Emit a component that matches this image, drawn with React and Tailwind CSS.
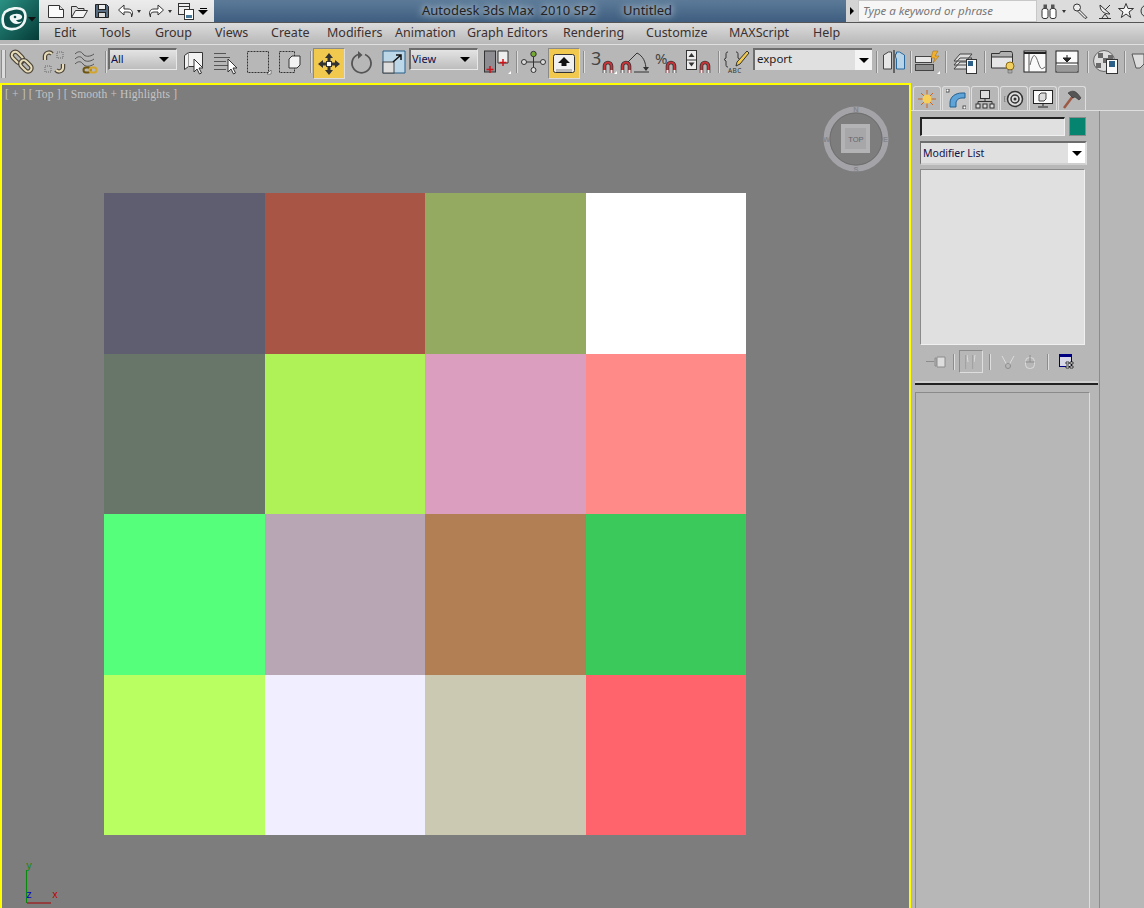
import React from "react";

const swatches = [
  "bg-[#5f5d70]", "bg-[#a95546]", "bg-[#94aa60]", "bg-[#ffffff]",
  "bg-[#68766a]", "bg-[#aef257]", "bg-[#db9ebf]", "bg-[#ff8a87]",
  "bg-[#55ff7c]", "bg-[#b8a6b5]", "bg-[#b27e54]", "bg-[#3bc95c]",
  "bg-[#b9ff62]", "bg-[#f0eeff]", "bg-[#cbc9b1]", "bg-[#ff636b]",
];

const menus = [
  ["Edit", "w-[46px]"], ["Tools", "w-[55px]"], ["Group", "w-[60px]"], ["Views", "w-[56px]"],
  ["Create", "w-[56px]"], ["Modifiers", "w-[68px]"], ["Animation", "w-[72px]"], ["Graph Editors", "w-[96px]"],
  ["Rendering", "w-[83px]"], ["Customize", "w-[83px]"], ["MAXScript", "w-[84px]"], ["Help", "w-[40px]"],
];

function Ico({ w, h = 24, ml, children }) {
  return (
    <svg width={w} height={h} viewBox={`0 0 ${w} ${h}`} className={`shrink-0 overflow-visible ${ml || ""}`}>
      {children}
    </svg>
  );
}

function Sep({ ml }) {
  return <div className={`w-[2px] h-[22px] mt-[1px] shrink-0 bg-[#8c8c8c] border-r border-[#dedede] ${ml}`}></div>;
}

function Chain() {
  return (
    <g transform="rotate(45 12 12)">
      <rect x="-1" y="8.500" width="13" height="7" rx="3.500" fill="none" stroke="#4a4438" strokeWidth="4.400" />
      <rect x="-1" y="8.500" width="13" height="7" rx="3.500" fill="none" stroke="#e9dcb8" strokeWidth="2" />
      <rect x="11" y="8.500" width="13" height="7" rx="3.500" fill="none" stroke="#4a4438" strokeWidth="4.400" />
      <rect x="11" y="8.500" width="13" height="7" rx="3.500" fill="none" stroke="#e9dcb8" strokeWidth="2" />
    </g>
  );
}

function Magnet({ x, y }) {
  return (
    <g transform={`translate(${x} ${y})`}>
      <path d="M1.500 12V5a3.500 3.500 0 0 1 7 0v7" fill="none" stroke="#333" strokeWidth="3.600" />
      <path d="M1.500 12V5a3.500 3.500 0 0 1 7 0v7" fill="none" stroke="#c8343a" strokeWidth="2" />
      <path d="M0.500 9h2v3h-2zM7.500 9h2v3h-2z" fill="#eee" />
    </g>
  );
}

function Arrow({ x, y }) {
  return (
    <path transform={`translate(${x} ${y})`} d="M0 0v13l3-3 2.500 5 2-1-2.500-5h4z" fill="#fff" stroke="#333" strokeWidth="1" />
  );
}

function Tri() {
  return <div className="w-0 h-0 border-x-[5px] border-x-transparent border-t-[5px] border-t-black"></div>;
}

function SmallTri({ ml }) {
  return <div className={`${ml} w-0 h-0 border-x-[2.5px] border-x-transparent border-t-[3px] border-t-[#333]`}></div>;
}

function Drop({ label, ml }) {
  return (
    <div className={`w-[69px] ${ml} h-[22px] -mt-[2px] shrink-0 flex items-center justify-between pl-[1px] pr-[7px] text-[11px] text-[#10104a] bg-gradient-to-b from-[#e4e4e4] to-[#bdbdbd] border-t-2 border-l-2 border-[#6d6d6d] border-b border-r border-b-[#e8e8e8] border-r-[#e8e8e8]`}>
      <span>{label}</span>
      <Tri />
    </div>
  );
}

export default function App() {
  return (
    <div className="w-[1144px] h-[908px] overflow-hidden flex flex-col bg-[#b7b7b7] font-['Noto_Sans','Open_Sans',sans-serif] text-[#333]">
      {/* top: logo + title + menus */}
      <div className="flex h-[44px] shrink-0">
        <div className="w-[39px] h-[40px] shrink-0 flex items-center bg-gradient-to-br from-[#2a9184] to-[#063c38]">
          <svg width="39" height="40" viewBox="0 0 39 40">
            <path d="M5 12c5-4 14-5 18-2 4 4 3 13-3 17-5 3-13 3-16-1-2-4-2-10 1-14z" fill="#0d4f4a" stroke="#eef7f5" strokeWidth="2.600" />
            <path d="M10 16c4-3 10-3 12 0 1 3-3 4-6 4 1 2 4 3 6 1-1 3-6 4-9 2-3-2-4-5-3-7z" fill="#eef7f5" />
            <circle cx="15" cy="17" r="1.300" fill="#0d4f4a" />
            <path d="M28 17h8l-4 4.500z" fill="#111" />
          </svg>
        </div>
        <div className="flex-1 flex flex-col min-w-0">
          <div className="h-[22px] flex shrink-0">
            <div className="w-[175px] shrink-0 flex items-center pl-[8px] bg-gradient-to-b from-[#ececec] to-[#dcdcdc]">
              <Ico w={18} h={18}><path d="M1.500 3.500h11l4 4v8h-15z" fill="#fbfbfb" stroke="#333" /><path d="M12.500 3.500v4h4" fill="#ddd" stroke="#333" /></Ico>
              <Ico w={18} h={18} ml="ml-[5px]"><path d="M1.500 15.500v-11h5l1.500 2h6v2" fill="#ddd" stroke="#333" /><path d="M1.500 15.500l4-7h12l-4 7z" fill="#f4f4f4" stroke="#333" /></Ico>
              <Ico w={16} h={18} ml="ml-[6px]"><path d="M1.500 2.500h11l2 2v11h-13z" fill="#566b80" stroke="#222" /><rect x="4.500" y="2.500" width="7" height="5" fill="#eee" stroke="#222" /><rect x="4.500" y="10.500" width="7" height="5" fill="#ddd" stroke="#222" /></Ico>
              <Ico w={17} h={18} ml="ml-[7px]"><path d="M7 3L1.500 8 7 13v-3h4c3 0 4 2 3.500 5 2-4 1-8-3.500-8H7z" fill="#fff" stroke="#333" /></Ico>
              <SmallTri ml="ml-[3px]" />
              <Ico w={17} h={18} ml="ml-[7px]"><path d="M10 3l5.500 5L10 13v-3H6c-3 0-4 2-3.500 5-2-4-1-8 3.500-8h4z" fill="#fff" stroke="#333" /></Ico>
              <SmallTri ml="ml-[3px]" />
              <Ico w={17} h={20} ml="ml-[6px]"><rect x="0.500" y="2.500" width="11" height="11" fill="#eee" stroke="#333" /><path d="M0.500 5.500h11" stroke="#333" /><rect x="6.500" y="8.500" width="9" height="10" fill="#fff" stroke="#333" /><rect x="8" y="14" width="6" height="3" fill="#4a7a9a" /></Ico>
              <div className="ml-[3px] flex flex-col items-center gap-[1px]"><div className="w-[7px] h-[1px] bg-black"></div><Tri /></div>
            </div>
            <div className="w-[632px] shrink-0 flex items-center bg-gradient-to-b from-[#5c7a98] to-[#3f5e80]">
              <span className="ml-[208px] text-[13px] text-[#222] whitespace-pre [text-shadow:0_0_6px_#ccd6df,0_0_10px_#ccd6df]">Autodesk 3ds Max  2010 SP2</span>
              <span className="ml-[27px] text-[13px] text-[#222] [text-shadow:0_0_6px_#ccd6df,0_0_10px_#ccd6df]">Untitled</span>
            </div>
            <div className="w-[12px] shrink-0 flex items-center justify-center bg-[#d4d4d4]">
              <div className="w-0 h-0 border-y-[4px] border-y-transparent border-l-[4px] border-l-black"></div>
            </div>
            <div className="w-[179px] shrink-0 flex items-center pl-[4px] text-[11.5px] italic text-[#777] bg-[#f6f6f6] border border-[#c8c8c8]">
              Type a keyword or phrase
            </div>
            <div className="flex-1 flex items-center pl-[4px] bg-[#dcdcdc]">
              <Ico w={16} h={18}><rect x="1" y="6.500" width="6" height="10" rx="2" fill="#fff" stroke="#333" /><rect x="9" y="6.500" width="6" height="10" rx="2" fill="#fff" stroke="#333" /><rect x="2.500" y="2.500" width="3.500" height="4" fill="#555" /><rect x="10" y="2.500" width="3.500" height="4" fill="#555" /></Ico>
              <SmallTri ml="ml-[5px]" />
              <Ico w={17} h={18} ml="ml-[6px]"><circle cx="5" cy="5.500" r="3.500" fill="#eee" stroke="#333" /><path d="M7.500 8l7.500 7.500-2 1L6 9.500z" fill="#eee" stroke="#333" /></Ico>
              <Ico w={16} h={18} ml="ml-[8px]"><path d="M3 3c0 6 4 9 10 9z" fill="#eee" stroke="#333" /><path d="M8 8l5-5M2 16.500h12M8 12l-3 4M8 12l3 4" stroke="#333" fill="none" /></Ico>
              <Ico w={16} h={18} ml="ml-[5px]"><path d="M8 1.500l2 5h5.500l-4.500 3.500 1.700 5.500L8 12l-4.700 3.500L5 10 .5 6.500H6z" fill="#f6f6f6" stroke="#333" /></Ico>
              <Ico w={10} h={18} ml="ml-[5px]"><circle cx="8" cy="9" r="6" fill="none" stroke="#333" /></Ico>
            </div>
          </div>
          <div className="h-[1px] bg-[#555] shrink-0"></div>
          <div className="flex-1 flex items-center pl-[15px] text-[12.5px] text-[#3b3030] bg-gradient-to-b from-[#dcdcdc] to-[#b8b8b8]">
            {menus.map(([label, width]) => (
              <span key={label} className={`${width} shrink-0`}>{label}</span>
            ))}
          </div>
        </div>
      </div>

      {/* main toolbar */}
      <div className="h-[39px] shrink-0 flex items-start pt-[5px] border-t border-[#e0e0e0]">
        <div className="w-[5px] h-[28px] shrink-0 ml-[1px] border-x border-[#8c8c8c] bg-[#dcdcdc]"></div>
        <Ico w={24} ml="ml-[4px]"><Chain /></Ico>
        <Ico w={24} ml="ml-[8px]">
          <path d="M3 10V6a4 4 0 0 1 7-2M21 14v4a4 4 0 0 1-7 2" fill="none" stroke="#4a4438" strokeWidth="4.400" />
          <path d="M3 10V6a4 4 0 0 1 7-2M21 14v4a4 4 0 0 1-7 2" fill="none" stroke="#e9dcb8" strokeWidth="2" />
          <path d="M15 2h6v6h-6zM3 16h6v6H3z" fill="none" stroke="#666" strokeDasharray="1 1" />
        </Ico>
        <Ico w={25} ml="ml-[8px]">
          <path d="M1 4c3-3 6-3 8 0s7 3 11 0M1 9c3-3 6-3 8 0s7 3 11 0M1 14c3-3 6-3 8 0s7 3 11 0" fill="none" stroke="#555" strokeWidth="1" />
          <rect x="9.500" y="17.500" width="7" height="5" rx="2.500" fill="none" stroke="#6d5510" strokeWidth="2" />
          <rect x="15.500" y="17.500" width="7" height="5" rx="2.500" fill="none" stroke="#d4a52c" strokeWidth="2" />
        </Ico>
        <Sep ml="ml-[6px]" />
        <Drop label="All" ml="ml-[1px]" />
        <Ico w={22} ml="ml-[6px]">
          <path d="M1.500 5.500l4-3h14v14h-14l-4 3z" fill="#f2f2f2" stroke="#333" />
          <path d="M5.500 2.500v14" stroke="#999" />
          <Arrow x={11} y={9} />
        </Ico>
        <Ico w={26} ml="ml-[8px]">
          <path d="M1 3.500h12M1 7.500h16M1 11.500h12M1 15.500h16M1 19.500h12" stroke="#555" />
          <Arrow x={15} y={9} />
        </Ico>
        <Ico w={25} ml="ml-[7px]">
          <rect x="1.500" y="1.500" width="21" height="21" fill="none" stroke="#333" strokeDasharray="2 1" />
          <path d="M21 24h4v-4z" fill="#fff" stroke="#333" strokeWidth=".5" />
        </Ico>
        <Ico w={24} ml="ml-[7px]">
          <rect x="1.500" y="1.500" width="15" height="21" fill="none" stroke="#333" strokeDasharray="2 1" />
          <path d="M11 9l3-3h8v9l-3 3h-8z" fill="#f2f2f2" stroke="#333" />
        </Ico>
        <Sep ml="ml-[8px]" />
        <div className="ml-[1px] -mt-[2px] w-[32px] h-[31px] shrink-0 flex items-center justify-center bg-[#f2c94f] border border-[#8a8a8a] border-b-[#dedede] border-r-[#dedede]">
          <svg width="24" height="24" viewBox="0 0 24 24">
            <path d="M12 1l4 5h-2.500v3h-3V6H8zM12 23l4-5h-2.500v-3h-3v3H8zM1 12l5-4v2.500h3v3H6V16zM23 12l-5-4v2.500h-3v3h3V16z" fill="#333" />
            <rect x="9.500" y="9.500" width="5" height="5" fill="#fff" stroke="#333" />
          </svg>
        </div>
        <Ico w={23} ml="ml-[5px]">
          <path d="M8 4.500a9.500 9.500 0 1 0 7 0" fill="none" stroke="#555" strokeWidth="1.800" />
          <path d="M8 1v8l4.500-4z" fill="#555" />
        </Ico>
        <Ico w={24} ml="ml-[9px]">
          <path d="M1 1h22v22H1z" fill="#bcd7e8" stroke="#2b5f88" />
          <rect x="1" y="12" width="11" height="11" fill="#ddd" stroke="#444" />
          <path d="M11 12l8-7m-5 0h5v5" fill="none" stroke="#111" strokeWidth="1.500" />
        </Ico>
        <Drop label="View" ml="ml-[3px]" />
        <Ico w={28} ml="ml-[5px]">
          <rect x="1.500" y="1" width="11" height="21" fill="#8d8d92" stroke="#333" />
          <path d="M15 1h10v12H15z" fill="#eee" stroke="#333" />
          <path d="M7 16v7M3.500 19.500h7M20 9v7M16.500 12.500h7" stroke="#d0121a" strokeWidth="1.500" />
          <path d="M25 24h3v-3z" fill="#fff" />
        </Ico>
        <Sep ml="ml-[5px]" />
        <Ico w={25} ml="ml-[3px]">
          <path d="M12.500 5v14M3 12h19" stroke="#333" />
          <circle cx="12.500" cy="4" r="2.700" fill="#77aa33" stroke="#333" />
          <circle cx="3" cy="12" r="2.500" fill="#ddd" stroke="#333" />
          <circle cx="22" cy="12" r="2.500" fill="#ddd" stroke="#333" />
          <circle cx="12.500" cy="20" r="2.500" fill="#ddd" stroke="#333" />
        </Ico>
        <div className="ml-[2px] -mt-[2px] w-[32px] h-[31px] shrink-0 flex items-center justify-center bg-[#f2c94f] border border-[#8a8a8a] border-b-[#dedede] border-r-[#dedede]">
          <svg width="24" height="22" viewBox="0 0 24 22">
            <rect x="1.500" y="1.500" width="21" height="18" rx="2" fill="#f0f0f0" stroke="#333" />
            <path d="M4 16h16v3H4z" fill="#bbb" />
            <path d="M12 4l6 6h-3.500v3h-5v-3H6z" fill="#111" />
          </svg>
        </div>
        <Sep ml="ml-[3px]" />
        <Ico w={26} ml="ml-[6px]">
          <text x="0" y="15" fontSize="18" fill="#444" fontFamily="Noto Sans, sans-serif">3</text>
          <Magnet x={12} y={11} />
          <path d="M23 24h3v-3z" fill="#fff" />
        </Ico>
        <Ico w={29} ml="ml-[4px]">
          <path d="M13 22h15M5 14L16 3c6 3 9 9 9 17" fill="none" stroke="#333" />
          <path d="M22 17l3 4 3-4z" fill="#333" />
          <Magnet x={0} y={11} />
        </Ico>
        <Ico w={24} ml="ml-[5px]">
          <text x="0" y="14" fontSize="15" fill="#444" fontFamily="Noto Sans, sans-serif">%</text>
          <Magnet x={11} y={11} />
        </Ico>
        <Ico w={26} ml="ml-[7px]">
          <rect x="0.500" y="0.500" width="10" height="19" fill="#eee" stroke="#333" />
          <path d="M0.500 10h10" stroke="#333" />
          <path d="M5.500 3l3 4h-6zM5.500 16.500l3-4h-6z" fill="#333" />
          <Magnet x={14} y={11} />
        </Ico>
        <Sep ml="ml-[6px]" />
        <Ico w={26} ml="ml-[3px]">
          <path d="M5 2c-2 0-2 1-2 3v3L1 9.500 3 11v3c0 2 0 3 2 3M13 2c2 0 2 1 2 3v3l2 1.500" fill="none" stroke="#333" />
          <path d="M24 1l2 2-9 11-4 2 1-4z" fill="#f2c94f" stroke="#333" />
          <text x="5" y="23" fontSize="6.500" fill="#333" letterSpacing=".4" fontFamily="Noto Sans, sans-serif">ABC</text>
        </Ico>
        <div className="ml-[4px] -mt-[2px] w-[119px] h-[22px] shrink-0 flex items-center justify-between pl-[2px] pr-[7px] pb-[2px] text-[11.5px] text-[#222] bg-[#e0e0e0] border-t-2 border-l-2 border-[#6d6d6d]">
          <span>export</span>
          <div className="w-[17px] -mr-[7px] -mb-[2px] h-[20px] bg-[#f4f4f4] flex items-center justify-center"><Tri /></div>
        </div>
        <Sep ml="ml-[4px]" />
        <Ico w={24} ml="ml-[4px]">
          <path d="M1.500 5l5-3h3v17h-8z" fill="#e6e6e6" stroke="#444" />
          <path d="M12 0v23" stroke="#111" />
          <path d="M22.500 5l-5-3h-3v2h-1v3l1 2v10h8z" fill="#b8d4e8" stroke="#2b6a9e" />
        </Ico>
        <Sep ml="ml-[4px]" />
        <Ico w={26} ml="ml-[2px]">
          <rect x="1.500" y="6.500" width="16" height="6" fill="#e8e8e8" stroke="#444" />
          <rect x="1.500" y="14.500" width="18" height="6" fill="#909090" stroke="#444" />
          <path d="M19 1l5 0-3 5h4l-6 7 2-5h-4z" fill="#f0b030" stroke="#a06a10" strokeWidth=".5" />
          <path d="M23 24h3v-3z" fill="#fff" />
        </Ico>
        <Sep ml="ml-[5px]" />
        <Ico w={24} ml="ml-[6px]">
          <path d="M1 11l6-7h12l-6 7zM1 15l6-7h12l-6 7zM1 19l6-7h12l-6 7z" fill="#ddd" stroke="#444" />
          <rect x="13.500" y="9.500" width="10" height="14" fill="#fafafa" stroke="#333" />
          <rect x="15" y="11" width="5" height="5" fill="#2b5f88" />
        </Ico>
        <Sep ml="ml-[7px]" />
        <Ico w={26} ml="ml-[4px]">
          <path d="M1.500 3.500h8l1-2h11l1 2v14h-21z" fill="#b0b0b0" stroke="#333" />
          <path d="M1.500 7h21v11h-21z" fill="#e6e6e6" stroke="#333" />
          <circle cx="20" cy="16" r="4" fill="#f2d060" stroke="#8a6a10" />
          <path d="M18 20h4v3h-4z" fill="#aaa" stroke="#555" strokeWidth=".5" />
        </Ico>
        <Ico w={24} ml="ml-[7px]">
          <rect x="1" y="1" width="22" height="21" fill="#fafafa" stroke="#222" />
          <path d="M1 3h22" stroke="#222" strokeWidth="2" />
          <path d="M6 4v18" stroke="#555" />
          <path d="M7 15c3-12 5-12 8-3s4 7 7 5" fill="none" stroke="#666" />
        </Ico>
        <Ico w={24} ml="ml-[8px]">
          <rect x="1" y="1" width="22" height="21" fill="#fafafa" stroke="#222" />
          <path d="M1 13h22" stroke="#222" />
          <rect x="2" y="15" width="20" height="6" fill="#999" />
          <path d="M12 5v4M8 8h8l-4 4z" fill="#222" stroke="#222" />
        </Ico>
        <Sep ml="ml-[8px]" />
        <Ico w={25} ml="ml-[4px]">
          <circle cx="11" cy="11" r="10.500" fill="#dcdcdc" stroke="#666" />
          <path d="M5 3h5v5H5zM15 5h5v5h-5zM10 8h5v5h-5zM3 13h5v5H3zM15 13h5v5h-5z" fill="#6a6a6a" />
          <rect x="13.500" y="9.500" width="11" height="14" fill="#fafafa" stroke="#333" />
          <rect x="16" y="11" width="6" height="6" fill="#2b5f88" />
        </Ico>
        <Sep ml="ml-[6px]" />
        <Ico w={14} ml="ml-[5px]">
          <path d="M1 4h12v10l-4 4H5z" fill="#ddd" stroke="#555" />
        </Ico>
      </div>

      {/* body */}
      <div className="flex-1 flex min-h-0">
        <div className="relative w-[911px] shrink-0 bg-[#7d7d7d] border-2 border-[#ffff00] border-b-0">
          <div className="absolute left-[3px] top-[1px] text-[11.5px] tracking-[.15px] text-[#c4c4c4] font-['Liberation_Serif',serif] whitespace-pre">[ + ] [ Top ] [ Smooth + Highlights ]</div>
          <div className="absolute left-[820px] top-[20px] w-[68px] h-[68px]">
            <svg width="68" height="68" viewBox="0 0 68 68" className="overflow-visible">
              <circle cx="34" cy="34" r="29.500" fill="none" stroke="#a3a3a8" strokeWidth="6" />
              <circle cx="34" cy="34" r="26" fill="none" stroke="#6f6f6f" strokeWidth="1" />
              <rect x="19" y="19" width="29" height="29" fill="#b3b3b5" />
              <rect x="23" y="23" width="21" height="21" fill="#a7a7a9" />
              <text x="34" y="37" fontSize="7.500" textAnchor="middle" fill="#66666a" fontFamily="Liberation Sans, sans-serif">TOP</text>
              <text x="34" y="7" fontSize="7.500" textAnchor="middle" fill="#85858c" fontFamily="Liberation Sans, sans-serif" fontWeight="700">N</text>
              <text x="34" y="67" fontSize="7.500" textAnchor="middle" fill="#85858c" fontFamily="Liberation Sans, sans-serif" fontWeight="700">S</text>
              <text x="1" y="37" fontSize="7.500" fill="#85858c" fontFamily="Liberation Sans, sans-serif" fontWeight="700">W</text>
              <text x="61" y="37" fontSize="7.500" fill="#85858c" fontFamily="Liberation Sans, sans-serif" fontWeight="700">E</text>
            </svg>
          </div>
          <div className="absolute left-[20px] top-[775px]">
            <svg width="45" height="50" viewBox="0 0 45 50" className="overflow-visible">
              <path d="M4.500 10v33" stroke="#0a8a0a" strokeWidth="1" />
              <path d="M5 43h24" stroke="#a80000" strokeWidth="1" />
              <text x="4" y="9" fontSize="10" fill="#0a8a0a" fontFamily="Liberation Mono, monospace">y</text>
              <text x="4" y="38" fontSize="10" fill="#0000c0" fontFamily="Liberation Mono, monospace">z</text>
              <text x="30" y="38" fontSize="10" fill="#c00000" fontFamily="Liberation Mono, monospace">x</text>
            </svg>
          </div>
          <div className="ml-[102px] mt-[108px] w-[642px] h-[642px] grid grid-cols-4 grid-rows-4">
            {swatches.map((cls, i) => (
              <div key={i} className={cls}></div>
            ))}
          </div>
        </div>

        {/* command panel */}
        <div className="flex-1 flex flex-col pt-[3px] min-w-0">
          <div className="h-[25px] shrink-0 flex pl-[2px] gap-[1px] border-b border-[#dedede]">
            {[0, 1, 2, 3, 4, 5].map((t) => (
              <div key={t} className={`w-[28px] flex items-center justify-center border border-b-0 border-[#dedede] rounded-t-[3px] ${t === 1 ? "bg-[#c6c6c6]" : ""}`}>
                <svg width="20" height="20" viewBox="0 0 20 20">
                  {t === 0 && (
                    <>
                      <path d="M10 1v18M1 10h18M4 4l12 12M16 4L4 16" stroke="#c8641e" strokeWidth="1" />
                      <circle cx="10" cy="10" r="4.500" fill="#f6cf5a" />
                    </>
                  )}
                  {t === 1 && (
                    <>
                      <path d="M4 18V14C4 8 9 4 16 4h3v5h-3c-3 0-6 2-6 5v4z" fill="#5fa4d8" stroke="#24608e" />
                      <rect x="0" y="0" width="3" height="3" fill="#fff" stroke="#333" strokeWidth=".8" />
                      <rect x="17" y="17" width="3" height="3" fill="#fff" stroke="#333" strokeWidth=".8" />
                    </>
                  )}
                  {t === 2 && (
                    <>
                      <rect x="5.500" y="1.500" width="9" height="8" fill="#ddd" stroke="#333" />
                      <path d="M10 9.500v3M3 15v-2.500h14V15" fill="none" stroke="#333" />
                      <rect x="1" y="15" width="4" height="4" fill="#ddd" stroke="#333" />
                      <rect x="8" y="15" width="4" height="4" fill="#ddd" stroke="#333" />
                      <rect x="15" y="15" width="4" height="4" fill="#ddd" stroke="#333" />
                    </>
                  )}
                  {t === 3 && (
                    <>
                      <circle cx="11" cy="10" r="7.500" fill="#ddd" stroke="#333" strokeWidth="1.500" />
                      <circle cx="11" cy="10" r="4" fill="none" stroke="#333" strokeWidth="1.500" />
                      <circle cx="11" cy="10" r="1.500" fill="#333" />
                      <path d="M1 7c-1 2-1 4 0 6" fill="none" stroke="#777" />
                    </>
                  )}
                  {t === 4 && (
                    <>
                      <rect x="0.500" y="1.500" width="19" height="13" fill="#fafafa" stroke="#222" />
                      <path d="M6 6l2-2h5v6l-2 2H6z" fill="#ddd" stroke="#444" />
                      <path d="M10 15v2M5 18h10" stroke="#222" />
                    </>
                  )}
                  {t === 5 && (
                    <>
                      <path d="M2 19L11 7" stroke="#9c5a44" strokeWidth="2.500" />
                      <path d="M6 4c4-3 8-3 13 5l-2 2-4-3-2 1z" fill="#555" stroke="#222" strokeWidth=".5" />
                    </>
                  )}
                </svg>
              </div>
            ))}
          </div>
          <div className="flex-1 flex min-h-0">
            <div className="w-[189px] shrink-0 flex flex-col border-r border-[#8c8c8c]">
              <div className="mt-[6px] ml-[9px] flex gap-[4px] shrink-0">
                <div className="w-[145px] h-[19px] bg-[#e0e0e0] border-t-2 border-l-2 border-[#222] border-b border-r border-b-[#f0f0f0] border-r-[#f0f0f0]"></div>
                <div className="w-[17px] h-[19px] bg-[#058570] border border-[#8a8a8a]"></div>
              </div>
              <div className="mt-[5px] ml-[9px] w-[167px] h-[24px] shrink-0 flex items-center justify-between pl-[2px] text-[10.5px] text-[#10104a] bg-[#e0e0e0] border-t-2 border-l border-[#6d6d6d] border-r-2 border-r-[#dedede] border-b-2 border-b-[#cfcfcf]">
                <span className="mt-[1px]">Modifier List</span>
                <div className="w-[17px] h-full bg-white flex items-center justify-center"><Tri /></div>
              </div>
              <div className="mt-[4px] ml-[9px] w-[165px] h-[176px] shrink-0 bg-[#e0e0e0] border border-[#8a8a8a] border-b-[#f0f0f0] border-r-[#f0f0f0]"></div>
              <div className="mt-[5px] ml-[15px] h-[23px] shrink-0 flex items-center">
                <svg width="20" height="16" viewBox="0 0 20 16">
                  <path d="M0 7.500h8M9 4h1v8H9zM11 3h8v10h-8z" fill="#ddd" stroke="#8c8c8c" />
                </svg>
                <div className="ml-[7px] w-[2px] h-[16px] bg-[#8c8c8c] border-r border-[#dedede]"></div>
                <div className="ml-[4px] w-[24px] h-[23px] flex items-center justify-center border border-[#8a8a8a] border-b-[#dedede] border-r-[#dedede]">
                  <svg width="12" height="16" viewBox="0 0 12 16"><path d="M1.500 1v14M2 1l1 7M8.500 1v14M10 1l-1 7" stroke="#dcdcdc" fill="none" /><path d="M1 1v14M8 1v14" stroke="#8c8c8c" /></svg>
                </div>
                <div className="ml-[6px] w-[2px] h-[16px] bg-[#8c8c8c] border-r border-[#dedede]"></div>
                <svg className="ml-[10px]" width="14" height="16" viewBox="0 0 14 16"><path d="M1 2l5 9M13 2L8 11" stroke="#dcdcdc" /><circle cx="7" cy="12" r="2.500" fill="none" stroke="#8c8c8c" /></svg>
                <svg className="ml-[9px]" width="12" height="16" viewBox="0 0 12 16"><rect x="1.500" y="3.500" width="9" height="11" rx="4" fill="none" stroke="#dcdcdc" /><path d="M1.500 8h9M6 1v7" stroke="#8c8c8c" /></svg>
                <div className="ml-[11px] w-[2px] h-[16px] bg-[#8c8c8c] border-r border-[#dedede]"></div>
                <svg className="ml-[10px]" width="16" height="16" viewBox="0 0 16 16"><rect x="0.500" y="0.500" width="12" height="12" fill="#d8d8e8" stroke="#000080" /><path d="M1 1h11v2H1z" fill="#000080" /><path d="M7 8h3v2H7zM11 8h3v2h-3zM7 12h3v2H7zM11 12h3v2h-3z" fill="#fff" stroke="#111" strokeWidth=".8" /></svg>
              </div>
              <div className="mt-[8px] ml-[4px] w-[183px] h-[4px] shrink-0 bg-[#222] border-t-2 border-[#cfcfcf]"></div>
              <div className="mt-[7px] ml-[4px] w-[175px] flex-1 border-t border-l border-[#8a8a8a] border-r border-r-[#dedede]"></div>
            </div>
          </div>
        </div>
      </div>
    </div>
  );
}
